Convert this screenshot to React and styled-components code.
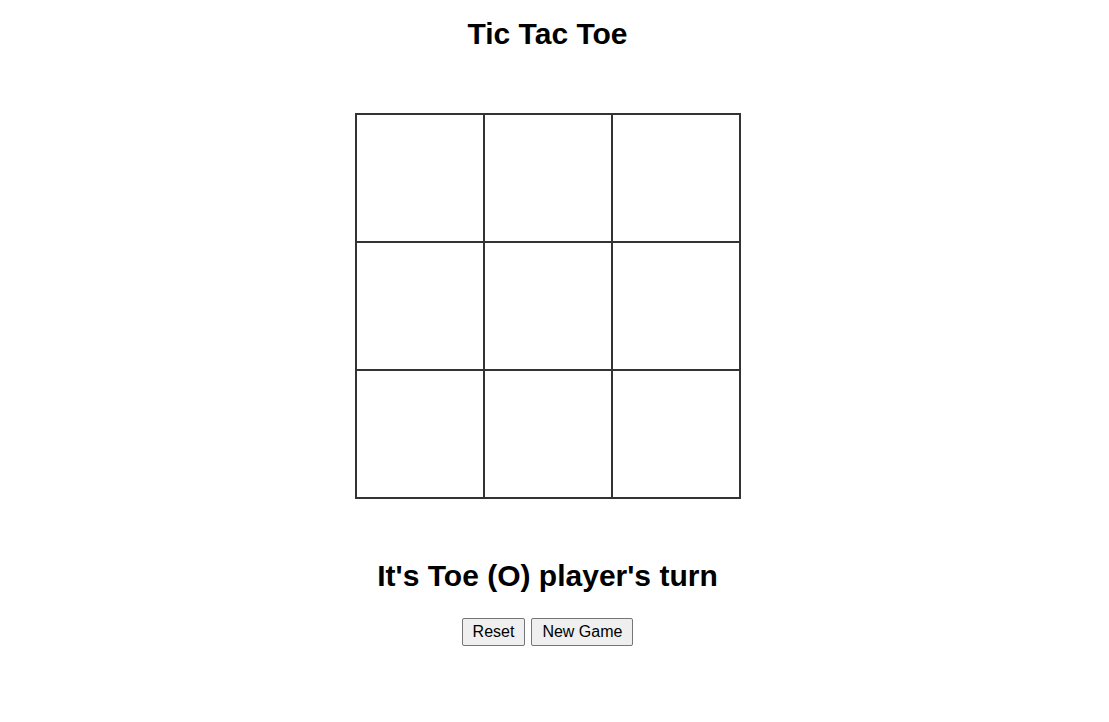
import React, { useState } from 'react';
import styled, { createGlobalStyle } from 'styled-components';

const GlobalStyle = createGlobalStyle`
body {
  margin: 0;
  background: #ffffff;
  font-family: "Liberation Sans", Arial, sans-serif;
  color: #000;
}
`

const Page = styled.div`
width: calc(100% - 14px);
display: flex;
flex-direction: column;
align-items: center;
padding-top: 17px;
`

const Title = styled.h1`
margin: 0;
font-size: 30px;
line-height: 34px;
font-weight: bold;
`

const Board = styled.div`
margin-top: 62px;
display: grid;
grid-template-columns: repeat(3, 126px);
grid-template-rows: repeat(3, 126px);
gap: 2px;
background-color: #333;
border: 2px solid #333;
`

const Cell = styled.div`
background-color: #fff;
display: flex;
align-items: center;
justify-content: center;
font-size: 60px;
font-weight: bold;
cursor: pointer;
`

const Status = styled.h2`
margin: 60px 0 0;
font-size: 30px;
line-height: 34px;
font-weight: bold;
`

const Controls = styled.div`
margin-top: 25px;
display: flex;
gap: 6px;
`

const Button = styled.button`
font-family: "Liberation Sans", Arial, sans-serif;
font-size: 16px;
line-height: 18px;
padding: 4px 10px;
background-color: #efefef;
border: 1px solid #767676;
border-radius: 2px;
color: #000;
cursor: pointer;

&:hover{
  background-color: #e5e5e5;
}
`

const App = () => {
  const [cells, setCells] = useState(Array(9).fill(''))
  const [turn, setTurn] = useState('O')

  const play = (i) => {
    if (cells[i]) return
    const next = [...cells]
    next[i] = turn
    setCells(next)
    setTurn(turn === 'O' ? 'X' : 'O')
  }

  const reset = () => {
    setCells(Array(9).fill(''))
    setTurn('O')
  }

  return (
    <Page>
      <GlobalStyle />
      <Title>Tic Tac Toe</Title>
      <Board>
        {cells.map((c, i) => (
          <Cell key={i} onClick={() => play(i)}>{c}</Cell>
        ))}
      </Board>
      <Status>It's {turn === 'O' ? 'Toe (O)' : 'Tic (X)'} player's turn</Status>
      <Controls>
        <Button onClick={reset}>Reset</Button>
        <Button onClick={reset}>New Game</Button>
      </Controls>
    </Page>
  )
}

export default App
